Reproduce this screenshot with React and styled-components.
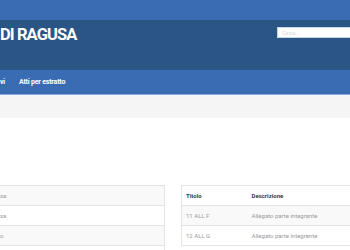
import React from "react";
import styled, { createGlobalStyle } from "styled-components";

const GlobalStyle = createGlobalStyle`
  html, body { margin: 0; padding: 0; background: #fff; }
  body { font-family: Roboto, "Open Sans", "Liberation Sans", sans-serif; overflow: hidden; }
  * { box-sizing: border-box; }
`;

const Page = styled.div`
  width: 350px;
  height: 250px;
  overflow: hidden;
  display: flex;
  flex-direction: column;
  & > * { flex-shrink: 0; }
`;

const TopBar = styled.div`
  height: 20px;
  background: #3a6cb4;
`;

const Header = styled.div`
  height: 50px;
  background: #2b5585;
  display: flex;
  justify-content: space-between;
  align-items: flex-start;
`;

const Title = styled.h1`
  margin: 5px 0 0 0;
  color: #fff;
  font-size: 16.5px;
  line-height: 20px;
  font-weight: 700;
  letter-spacing: -0.9px;
`;

const Search = styled.input`
  margin-top: 7px;
  width: 73px;
  height: 11px;
  border: 1px solid #c9d6e6;
  border-right: none;
  background: #fff;
  padding: 0 4px;
  font-size: 5px;
  color: #bbb;
  outline: none;
  &::placeholder { color: #d6d6d6; }
`;

const Nav = styled.nav`
  height: 25px;
  background: #3a6cb4;
  border-bottom: 1px solid #86aadb;
  display: flex;
  align-items: center;
  gap: 14px;
`;

const NavItem = styled.span`
  color: #fff;
  font-size: 7px;
  font-weight: 700;
  letter-spacing: -0.2px;
`;

const Breadcrumb = styled.div`
  height: 23px;
  background: #f5f5f5;
`;

const Content = styled.div`
  padding-top: 67px;
  display: flex;
  align-items: flex-start;
  gap: 16px;
`;

const Table = styled.table`
  border-collapse: collapse;
  flex: ${(p) => (p.$grow ? "1 0 auto" : "0 0 auto")};
  width: ${(p) => p.$width};
  font-size: 6px;
  border-top: 1px solid #e3e3e3;
`;

const Row = styled.tr`
  height: 20px;
  background: ${(p) => (p.$striped ? "#f9f9f9" : "#fff")};
  border-bottom: 1px solid #e3e3e3;
`;

const Cell = styled.td`
  padding: 0 4px 0 ${(p) => (p.$flush ? "0" : "4px")};
  color: #9a9a9a;
  white-space: nowrap;
  border-left: ${(p) => (p.$first ? "1px solid #e3e3e3" : "none")};
  border-right: ${(p) => (p.$last ? "1px solid #e3e3e3" : "none")};
  width: ${(p) => p.$w || "auto"};
`;

const Head = styled(Cell).attrs({ as: "th" })`
  text-align: left;
  color: #3a3a3a;
  font-weight: 700;
`;

export default function App() {
  return (
    <>
      <GlobalStyle />
      <Page>
        <TopBar />
        <Header>
          <Title>DI RAGUSA</Title>
          <Search placeholder="Cerca..." />
        </Header>
        <Nav>
          <NavItem>vi</NavItem>
          <NavItem>Atti per estratto</NavItem>
        </Nav>
        <Breadcrumb />
        <Content>
          <Table $width="165px">
            <tbody>
              <Row $striped><Cell $flush $last>sa</Cell></Row>
              <Row><Cell $flush $last>sa</Cell></Row>
              <Row $striped><Cell $flush $last>o</Cell></Row>
              <Row><Cell $flush $last>&nbsp;</Cell></Row>
            </tbody>
          </Table>
          <Table $grow $width="250px">
            <thead>
              <Row>
                <Head $first $w="66px">Titolo</Head>
                <Head>Descrizione</Head>
              </Row>
            </thead>
            <tbody>
              <Row $striped>
                <Cell $first>11 ALL F</Cell>
                <Cell>Allegato parte integrante</Cell>
              </Row>
              <Row>
                <Cell $first>12 ALL G</Cell>
                <Cell>Allegato parte integrante</Cell>
              </Row>
            </tbody>
          </Table>
        </Content>
      </Page>
    </>
  );
}
